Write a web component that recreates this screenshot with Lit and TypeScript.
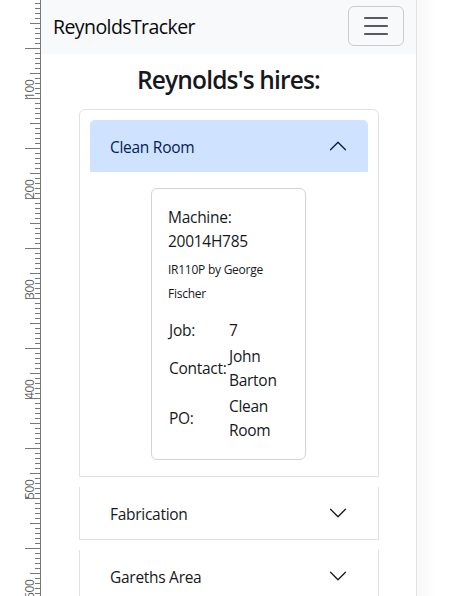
import { LitElement, html, css, svg } from "lit";
import { customElement, property } from "lit/decorators.js";

@customElement("side-ruler")
class SideRuler extends LitElement {
  static styles = css`
    :host { display: block; width: 41px; height: 596px; flex: none; }
    svg { display: block; }
    path { stroke: #777; fill: none; }
    text { font: 12px "Open Sans", "Noto Sans", sans-serif; fill: #5f5f5f; letter-spacing: -0.3px; }
  `;
  render() {
    let d = "M40.5 0V596";
    for (let i = 0; i * 5 + 3 < 596; i++) {
      // The first visible tick is the 5 mark; every 10th step is long.
      const n = i + 1;
      const len = n % 10 === 0 ? 15 : n % 5 === 0 ? 10 : 5;
      d += `M${40 - len} ${i * 5 + 3.5}h${len}`;
    }
    return html`<svg width="41" height="596" viewBox="0 0 41 596">
      <path d=${d} />
      ${[100, 200, 300, 400, 500, 600].map(
        (v) => svg`<text transform=${`translate(34 ${v - 1}) rotate(-90)`}>${v}</text>`,
      )}
    </svg>`;
  }
}

@customElement("hire-section")
class HireSection extends LitElement {
  @property() name = "";
  @property({ type: Boolean, reflect: true }) open = false;

  static styles = css`
    :host {
      display: block; box-sizing: border-box; width: 300px; margin-bottom: 10px;
      border: 1px solid #dee2e6; border-top: 0; background: #fff; color: #16191c;
    }
    :host([open]) {
      border-top: 1px solid #dee2e6; border-radius: 6px 6px 0 0; padding: 10px; height: 368px;
    }
    .head {
      display: flex; align-items: center; justify-content: space-between;
      box-sizing: border-box; height: 52px; padding: 0 30px; line-height: 24px;
    }
    :host([open]) .head {
      padding: 0 20px; background: #cfe2ff; color: #041c55;
      border-radius: 5px 5px 0 0; box-shadow: inset 0 -1px 0 #d5e0f2;
    }
    .label { position: relative; top: 1px; }
    svg { display: block; width: 20px; height: 20px; }
    :host([open]) svg { transform: rotate(180deg); }
    .body { padding: 16px 0 0 61px; }
  `;
  render() {
    return html`
      <div class="head">
        <span class="label">${this.name}</span>
        <svg viewBox="0 0 16 16" fill="currentColor">
          <path fill-rule="evenodd" d="M1.646 4.646a.5.5 0 0 1 .708 0L8 10.293l5.646-5.647a.5.5 0 0 1 .708.708l-6 6a.5.5 0 0 1-.708 0l-6-6a.5.5 0 0 1 0-.708z" />
        </svg>
      </div>
      ${this.open ? html`<div class="body"><slot></slot></div>` : ""}
    `;
  }
}

@customElement("app-root")
class AppRoot extends LitElement {
  static styles = css`
    :host {
      display: flex; width: 455px; height: 596px; overflow: hidden; background: #fff;
      font: 15.5px/24px "Open Sans", "Noto Sans", sans-serif; letter-spacing: -0.28px; color: #16191c;
    }
    .page {
      width: 375px; height: 596px; flex: none; background: #fff;
      border-right: 1px solid #dee2e6;
    }
    .shade { width: 20px; background: linear-gradient(90deg, #f8f8f8, #fff); }
    .nav {
      display: flex; align-items: center; justify-content: space-between;
      box-sizing: border-box; height: 54px; padding: 0 12px; background: #f8f9fa;
    }
    .brand { font-size: 19.5px; line-height: 30px; letter-spacing: -0.58px; color: #08090a; }
    .toggle {
      display: flex; align-items: center; justify-content: center; box-sizing: border-box;
      width: 56px; height: 40px; margin-top: -2px; border: 1px solid #cacbcd; border-radius: 6px;
    }
    h1 {
      margin: 11px 0 14px; text-align: center; font-size: 24.5px; line-height: 30px;
      font-weight: 600; letter-spacing: -0.85px;
    }
    .list { margin-left: 38px; }
    .card {
      box-sizing: border-box; width: 155px; height: 272px; padding: 16px;
      border: 1px solid #d2d3d4; border-radius: 6px; white-space: nowrap;
    }
    .model { font-size: 12px; letter-spacing: -0.25px; margin: 5px 0 10px; }
    table { border-collapse: separate; border-spacing: 0 2px; }
    td { padding: 0 0 0 1px; }
    td:first-child { width: 59px; }
  `;
  render() {
    return html`
      <side-ruler></side-ruler>
      <div class="page">
        <div class="nav">
          <span class="brand">ReynoldsTracker</span>
          <span class="toggle">
            <svg width="30" height="30" viewBox="0 0 30 30">
              <path stroke="#212529" stroke-opacity=".75" stroke-linecap="round" stroke-width="2" d="M4 7h22M4 15h22M4 23h22" />
            </svg>
          </span>
        </div>
        <h1>Reynolds's hires:</h1>
        <div class="list">
          <hire-section name="Clean Room" open>
            <div class="card">
              <div>Machine:<br />20014H785</div>
              <div class="model">IR110P by George<br />Fischer</div>
              <table cellspacing="0">
                <tr><td>Job:</td><td>7</td></tr>
                <tr><td>Contact:</td><td>John<br />Barton</td></tr>
                <tr><td>PO:</td><td>Clean<br />Room</td></tr>
              </table>
            </div>
          </hire-section>
          <hire-section name="Fabrication"></hire-section>
          <hire-section name="Gareths Area"></hire-section>
        </div>
      </div>
      <div class="shade"></div>
    `;
  }
}
